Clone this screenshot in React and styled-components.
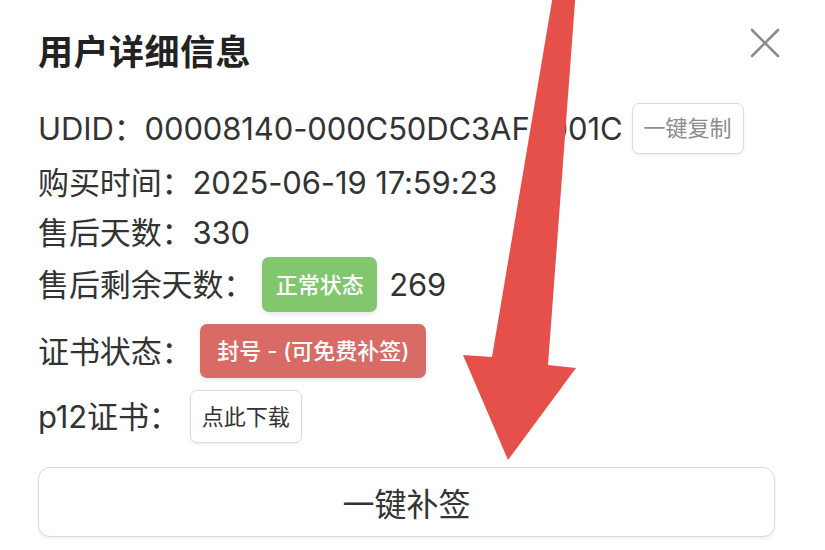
import React from "react";
import styled, { createGlobalStyle } from "styled-components";

const Global = createGlobalStyle`
  html, body { margin: 0; padding: 0; background: #ffffff; }
  body {
    font-family: "Inter", "Noto Sans CJK SC", sans-serif;
    color: #333333;
  }
`;

const Page = styled.div`
  position: relative;
  width: 825px;
  height: 550px;
  overflow: hidden;
  background: #ffffff;
  box-sizing: border-box;
  padding: 22px 50px 0 38px;
  display: flex;
  flex-direction: column;
`;

const Header = styled.div`
  height: 60px;
  display: flex;
  align-items: center;
  justify-content: space-between;
  margin-right: -5px;
  margin-bottom: 21px;
`;

const Title = styled.h1`
  margin: 0;
  font-size: 35px;
  font-weight: 700;
  color: #222222;
  line-height: 1;
  letter-spacing: 0.5px;
`;

const Close = styled.button`
  width: 30px;
  height: 30px;
  padding: 0;
  border: none;
  background: transparent;
  display: flex;
  align-items: center;
  justify-content: center;
  margin-top: -18px;
`;

const Row = styled.div`
  display: flex;
  align-items: center;
  height: ${(p) => p.$h || 50}px;
  margin-top: ${(p) => p.$mt || 0}px;
  font-size: 31px;
  line-height: 1;
  letter-spacing: -0.12px;
  white-space: nowrap;
  color: #333333;
`;

const Label = styled.span`
  margin-right: ${(p) => p.$gap || 0}px;
`;

const Value = styled.span`
  margin-left: ${(p) => p.$ml || 0}px;
`;

const SmallButton = styled.button`
  height: ${(p) => p.$h || 51}px;
  width: 112px;
  padding: 0;
  margin-left: ${(p) => p.$ml || 0}px;
  background: #ffffff;
  border: 1.5px solid #dcdcdc;
  border-radius: 7px;
  box-shadow: 0 2px 3px rgba(0, 0, 0, 0.06);
  font-family: inherit;
  font-size: 22px;
  color: ${(p) => p.$color || "#333333"};
  line-height: 1;
`;

const Badge = styled.span`
  display: inline-flex;
  align-items: center;
  justify-content: center;
  height: ${(p) => p.$h}px;
  width: ${(p) => p.$w}px;
  background: ${(p) => p.$bg};
  color: #ffffff;
  font-size: 22px;
  letter-spacing: 0;
  border-radius: 7px;
  box-shadow: 0 3px 4px rgba(120, 150, 200, 0.18);
  font-weight: 500;
`;

const MainButton = styled.button`
  margin-top: 24px;
  height: 70px;
  width: 100%;
  background: #ffffff;
  border: 1.5px solid #d9d9d9;
  border-radius: 12px;
  box-shadow: 0 2px 3px rgba(0, 0, 0, 0.06);
  font-family: inherit;
  font-size: 32px;
  color: #333333;
`;

const ArrowLayer = styled.svg`
  position: absolute;
  left: 0;
  top: 0;
  pointer-events: none;
`;

export default function App() {
  return (
    <>
      <Global />
      <Page>
        <Header>
          <Title>用户详细信息</Title>
          <Close aria-label="关闭">
            <svg width="30" height="30" viewBox="0 0 30 30">
              <path d="M2 2 L28 28 M28 2 L2 28" stroke="#8a8a8a" strokeWidth="2.6" strokeLinecap="round" />
            </svg>
          </Close>
        </Header>

        <Row $h={50}>
          <Label>UDID：00008140-000C50DC3AF8001C</Label>
          <SmallButton $ml={9} $color="#8c8c8c" $h={51}>一键复制</SmallButton>
        </Row>
        <Row $mt={4}>
          <Label>购买时间：</Label>
          <Value>2025-06-19 17:59:23</Value>
        </Row>
        <Row>
          <Label>售后天数：</Label>
          <Value>330</Value>
        </Row>
        <Row $h={55}>
          <Label $gap={8}>售后剩余天数：</Label>
          <Badge $bg="#82c66d" $w={115} $h={55}>正常状态</Badge>
          <Value $ml={12}>269</Value>
        </Row>
        <Row $h={54} $mt={12}>
          <Label $gap={8}>证书状态：</Label>
          <Badge $bg="#d96b66" $w={226} $h={54}>封号 - (可免费补签)</Badge>
        </Row>
        <Row $h={53} $mt={12}>
          <Label $gap={10}>p12证书：</Label>
          <SmallButton $h={53}>点此下载</SmallButton>
        </Row>

        <MainButton>一键补签</MainButton>

        <ArrowLayer width="825" height="550" viewBox="0 0 825 550">
          <polygon
            points="553,-5 575.5,-5 548,365 576,368 508,460 463,355 492,357"
            fill="#e6504a"
          />
        </ArrowLayer>
      </Page>
    </>
  );
}
